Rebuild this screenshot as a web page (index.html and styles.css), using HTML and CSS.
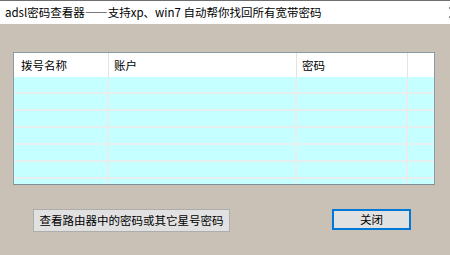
FILE: index.html
```html
<!DOCTYPE html>
<html lang="zh-CN">
<head>
<meta charset="utf-8">
<title>adsl密码查看器</title>
<link rel="stylesheet" href="styles.css">
</head>
<body>
<div class="window">
  <div class="titlebar">
    <span class="title">adsl密码查看器——支持xp、win7 自动帮你找回所有宽带密码</span>
    <svg class="close" width="10" height="11" viewBox="0 0 10 11"><path d="M0.5 0.5 L9.5 10.5 M9.5 0.5 L0.5 10.5" stroke="#111" stroke-width="1.2" fill="none"/></svg>
  </div>
  <div class="client">
    <div class="list">
      <div class="row head">
        <div class="cell">拨号名称</div>
        <div class="cell">账户</div>
        <div class="cell">密码</div>
        <div class="cell last"></div>
      </div>
      <div class="row"><div class="cell"></div><div class="cell"></div><div class="cell"></div><div class="cell last"></div></div>
      <div class="row"><div class="cell"></div><div class="cell"></div><div class="cell"></div><div class="cell last"></div></div>
      <div class="row"><div class="cell"></div><div class="cell"></div><div class="cell"></div><div class="cell last"></div></div>
      <div class="row"><div class="cell"></div><div class="cell"></div><div class="cell"></div><div class="cell last"></div></div>
      <div class="row"><div class="cell"></div><div class="cell"></div><div class="cell"></div><div class="cell last"></div></div>
      <div class="row"><div class="cell"></div><div class="cell"></div><div class="cell"></div><div class="cell last"></div></div>
      <div class="row tail"><div class="cell"></div><div class="cell"></div><div class="cell"></div><div class="cell last"></div></div>
    </div>
    <div class="buttons">
      <button class="btn btn-wide">查看路由器中的密码或其它星号密码</button>
      <button class="btn btn-close">关闭</button>
    </div>
  </div>
</div>
</body>
</html>
```
FILE: styles.css
```css
html, body {
  margin: 0;
  padding: 0;
}
body {
  width: 450px;
  height: 255px;
  overflow: hidden;
  background: #c9c1b6;
  font-family: "Noto Sans CJK SC", "Microsoft YaHei", sans-serif;
  font-size: 11.5px;
  color: #000;
}
.window {
  display: flex;
  flex-direction: column;
  height: 255px;
}
.titlebar {
  display: flex;
  align-items: center;
  justify-content: space-between;
  height: 23px;
  background: #fff;
  border-top: 1px solid #6f6f6f;
  padding-left: 5px;
  overflow: hidden;
}
.title {
  font-size: 11.5px;
  line-height: 23px;
  white-space: nowrap;
}
.close {
  margin-right: -9px;
  flex: none;
}
.client {
  display: flex;
  flex-direction: column;
  padding: 28px 15px 0 13px;
}
.list {
  width: 422px;
  height: 133px;
  box-sizing: border-box;
  border: 1px solid #8a9ba3;
  border-bottom-color: #7d8e96;
  background: #c6ffff;
  display: flex;
  flex-direction: column;
  overflow: hidden;
}
.row {
  display: grid;
  grid-template-columns: 95px 188px 111px 1fr;
  height: 17px;
  flex: none;
  box-sizing: border-box;
  border-bottom: 2px solid #e6eeee;
}
.row:nth-child(2) {
  height: 17px;
}
.row.head {
  height: 24px;
  background: #fff;
  border-bottom: none;
}
.row.tail {
  height: 5px;
  border-bottom: none;
}
.cell {
  border-right: 2px solid #e6eeee;
  padding-left: 6px;
  line-height: 24px;
  white-space: nowrap;
}
.row.head .cell {
  border-right: 1px solid #e3e3e3;
  padding-left: 5px;
}
.row.head .cell:first-child {
  padding-left: 7px;
}
.cell.last,
.row.head .cell.last {
  border-right: none;
}
.buttons {
  display: flex;
  align-items: flex-start;
  margin-top: 24px;
  padding-left: 20px;
}
.btn {
  font-family: "Noto Sans CJK SC", "Microsoft YaHei", sans-serif;
  font-size: 11.5px;
  color: #000;
  background: #e1e1e1;
  padding: 0;
  margin: 0;
  box-sizing: border-box;
  line-height: 1;
}
.btn-wide {
  width: 197px;
  height: 23px;
  border: 1px solid #adadad;
}
.btn-close {
  width: 79px;
  height: 21px;
  margin-left: 102px;
  border: 2px solid #0078d7;
}
```
